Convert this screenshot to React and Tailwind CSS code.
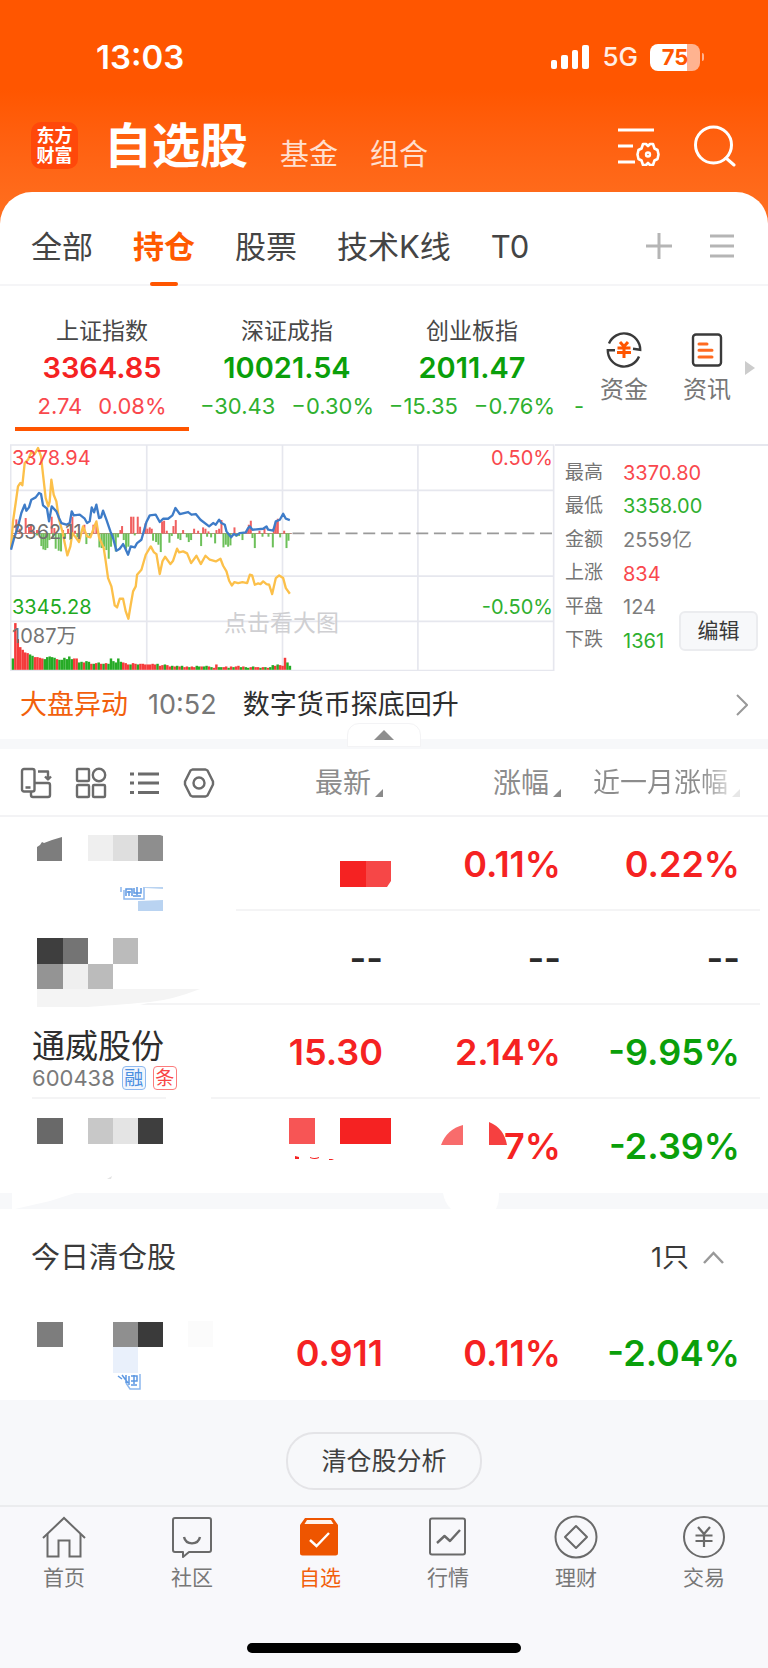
import React, { useState } from 'react';

const indices = [
  { name: '上证指数', value: '3364.85', change: '2.74', percent: '0.08%', up: true },
  { name: '深证成指', value: '10021.54', change: '−30.43', percent: '−0.30%', up: false },
  { name: '创业板指', value: '2011.47', change: '−15.35', percent: '−0.76%', up: false },
];

const marketStats = [
  { label: '最高', value: '3370.80', tone: 'text-[#f9484d]' },
  { label: '最低', value: '3358.00', tone: 'text-[#2fb02f]' },
  { label: '金额', value: '2559亿', tone: 'text-[#7d7d7d]' },
  { label: '上涨', value: '834', tone: 'text-[#f9484d]' },
  { label: '平盘', value: '124', tone: 'text-[#7d7d7d]' },
  { label: '下跌', value: '1361', tone: 'text-[#2fb02f]' },
];

// [x, height], drawn up or down from the zero line
const momentumBars = [
  [50, 42], [60, 14], [78, 46], [88, 20], [94, 26], [102, 8], [112, 10], [156, 50], [164, 16], [190, 10],
  [205, 14], [218, 50], [226, 8], [254, 26], [281, 26], [290, 22], [362, 10], [367, 22], [394, 50], [401, 50],
  [414, 50], [421, 20], [437, 30], [443, 14], [450, 18], [456, 14], [487, 36], [493, 38], [501, 8], [521, 22],
  [528, 40], [550, 10], [583, 14], [595, 8], [610, 18], [617, 14], [626, 6], [650, 10], [658, 14], [665, 40],
  [704, 18], [741, 10], [747, 26], [753, 38], [779, 8], [794, 14], [822, 16], [828, 36], [834, 44], [853, 8],
  [112, -6], [125, -38], [131, -48], [137, -50], [143, -44], [149, -20], [160, -12], [168, -46], [177, -52], [184, -54],
  [196, -16], [212, -20], [233, -12], [260, -32], [270, -8], [299, -42], [306, -44], [313, -40], [320, -50], [327, -76],
  [334, -40], [341, -16], [348, -54], [355, -12], [372, -20], [379, -46], [386, -40], [405, -6], [460, -22], [469, -26],
  [476, -34], [483, -56], [509, -28], [516, -8], [535, -16], [542, -20], [561, -12], [567, -26], [574, -20], [604, -38],
  [622, -10], [634, -12], [646, -30], [671, -42], [678, -34], [685, -40], [692, -36], [710, -10], [718, -8], [728, -20],
  [758, -14], [765, -44], [788, -10], [806, -10], [819, -42], [841, -12], [860, -44], [866, -22],
];

// [height, up]
const volumeBars = [
  [34, 0], [140, 1], [92, 1], [68, 1], [60, 1], [52, 1], [50, 1], [46, 0], [42, 0], [38, 1],
  [38, 1], [36, 1], [34, 1], [32, 0], [38, 0], [40, 0], [38, 0], [36, 0], [32, 1], [30, 0],
  [30, 0], [36, 0], [32, 0], [40, 0], [32, 0], [34, 1], [34, 1], [22, 0], [24, 0], [22, 1],
  [26, 0], [24, 0], [18, 1], [18, 0], [20, 1], [22, 0], [18, 1], [18, 0], [20, 1], [18, 0],
  [34, 0], [26, 0], [22, 0], [34, 0], [24, 0], [22, 1], [20, 1], [16, 1], [16, 0], [20, 1],
  [18, 1], [16, 0], [18, 1], [18, 1], [16, 1], [16, 1], [16, 1], [18, 1], [16, 1], [18, 0],
  [12, 1], [14, 1], [16, 0], [14, 1], [10, 1], [12, 0], [10, 1], [12, 0], [10, 1], [12, 0],
  [8, 1], [10, 1], [8, 0], [10, 1], [8, 1], [12, 0], [10, 0], [10, 1], [10, 0], [12, 0],
  [10, 1], [8, 0], [6, 1], [16, 1], [8, 0], [8, 0], [8, 1], [10, 1], [6, 0], [10, 1],
  [8, 0], [10, 1], [12, 1], [8, 0], [10, 1], [8, 0], [6, 0], [8, 1], [10, 0], [8, 1],
  [8, 1], [6, 0], [8, 1], [8, 0], [6, 1], [8, 0], [14, 0], [12, 1], [16, 0], [14, 1],
  [12, 1], [36, 1], [22, 0], [12, 0],
];

const averageLine =
  '34,350 40,270 48,215 55,165 62,155 68,162 75,95 85,85 95,62 105,68 115,50 124,75 130,130 138,200 146,225 150,210 155,145 162,190 170,210 178,265 188,300 195,335 203,372 212,345 218,305 228,318 238,332 250,285 262,315 272,318 282,290 290,270 298,318 312,350 318,390 325,440 335,465 345,522 352,528 360,502 370,502 378,540 386,562 393,520 400,480 408,465 412,430 425,415 438,370 453,345 462,362 470,368 480,428 488,390 496,376 512,398 520,388 532,352 538,363 550,360 562,366 574,395 590,373 603,398 617,373 630,385 648,390 662,382 670,403 680,420 688,448 696,462 704,452 715,455 728,452 742,455 750,430 757,432 765,460 775,456 782,458 790,450 800,458 808,460 817,488 828,440 838,432 850,440 858,470 870,487';

const priceLine =
  '34,355 42,325 55,285 65,245 75,220 80,238 88,228 95,205 108,198 118,185 124,188 130,222 142,232 148,270 156,225 170,240 178,260 185,275 200,280 210,275 216,240 222,252 240,250 255,262 262,275 270,270 276,228 283,243 290,220 298,260 304,258 310,238 320,265 332,300 340,320 350,358 360,352 370,338 376,350 385,370 393,345 405,348 412,335 425,325 432,300 440,272 450,252 468,250 480,272 490,262 505,262 518,252 527,230 540,248 565,242 575,250 588,248 602,265 628,285 640,275 648,280 658,265 665,275 675,280 680,300 694,318 702,308 710,312 720,305 738,303 745,290 750,285 758,295 790,292 800,285 805,295 820,298 828,270 840,265 850,247 858,262 870,266';

const SignalIcon = () => (
  <svg className="h-[26px] w-[40px]" viewBox="0 0 40 26" fill="white">
    <rect x="1" y="16" width="6" height="9" rx="2" />
    <rect x="11" y="11" width="7" height="14" rx="2" />
    <rect x="22" y="6" width="6" height="19" rx="2" />
    <rect x="32" y="1" width="7" height="24" rx="2" />
  </svg>
);

const FilterSettingsIcon = () => (
  <svg className="h-[40px] w-[42px]" viewBox="0 0 42 40" fill="none" stroke="white" strokeWidth="3">
    <path d="M0 4h36M0 20h15M0 36h17" />
    <path d="M25 18h3l2 2 2-2h3l1.500 4.500 3 1.500 1 4.500-1 4.500-3 1.500L35 39h-3l-2-2-2 2h-3l-1.500-4.500-3-1.500-1-4.500 1-4.500 3-1.500z" strokeWidth="2.600" strokeLinejoin="round" />
    <circle cx="30" cy="28.500" r="2" strokeWidth="2.400" />
  </svg>
);

const SearchIcon = () => (
  <svg className="h-[42px] w-[42px]" viewBox="0 0 42 42" fill="none" stroke="white" strokeWidth="3" strokeLinecap="round">
    <circle cx="19.500" cy="20" r="18" />
    <path d="M32 33l8 7" />
  </svg>
);

const FundsIcon = () => (
  <svg className="h-[36px] w-[36px]" viewBox="0 0 36 36" fill="none" stroke="#3a3a3a" strokeWidth="2.400">
    <path d="M3 11.500A16.200 16.200 0 0 1 34.200 17.800L27 16.800" />
    <path d="M33 24.500A16.200 16.200 0 0 1 1.800 18.200L9 18.200" />
    <path d="M14 10l4 4.500 4-4.500M11.500 16h13M11 20.500h14M18 14.500v11.500" stroke="#ff5500" strokeWidth="3" />
  </svg>
);

const NewsIcon = () => (
  <svg className="h-[36px] w-[32px]" viewBox="0 0 32 36" fill="none" stroke="#3a3a3a" strokeWidth="2.400">
    <rect x="2" y="2.500" width="28" height="31" rx="3" />
    <path d="M8 12h8M8 18.200h13M8 25h13" stroke="#ff6a20" strokeWidth="3" strokeLinecap="round" />
  </svg>
);

const SwapLayoutIcon = () => (
  <svg className="h-[32px] w-[32px]" viewBox="0 0 32 32" fill="none" stroke="#6b6b6b" strokeWidth="2.400" strokeLinejoin="round">
    <rect x="2" y="2" width="12.500" height="22.500" rx="2" />
    <path d="M14.500 16H28a2 2 0 0 1 2 2v10a2 2 0 0 1-2 2H13a2 2 0 0 1-2-2v-3.500" />
    <path d="M5.500 20.500h5M18 4.500h10V11M25 9.500l3 3 3-3" />
  </svg>
);

const GridIcon = () => (
  <svg className="h-[32px] w-[32px]" viewBox="0 0 32 32" fill="none" stroke="#6b6b6b" strokeWidth="2.400">
    <rect x="2" y="2" width="12" height="12" rx="1" />
    <circle cx="24" cy="8" r="6.200" />
    <rect x="2" y="18" width="12" height="12" rx="1" />
    <rect x="18" y="18" width="12" height="12" rx="1" />
  </svg>
);

const ListIcon = () => (
  <svg className="h-[26px] w-[30px]" viewBox="0 0 30 26" fill="none" stroke="#6b6b6b" strokeWidth="3">
    <path d="M0 4h4M0 13h4M0 22.500h4M8 4h21M8 13h21M8 22.500h21" />
  </svg>
);

const HexagonIcon = () => (
  <svg className="h-[30px] w-[32px]" viewBox="0 0 32 30" fill="none" stroke="#6b6b6b" strokeWidth="2.400" strokeLinejoin="round">
    <path d="M9.500 1.500h13l2 1L30 13.500v3l-5.500 11-2 1h-13l-2-1L2 16.500v-3l5.500-11z" />
    <circle cx="16" cy="15" r="5.500" />
  </svg>
);

const HomeIcon = () => (
  <svg className="h-[44px] w-[44px]" viewBox="0 0 44 44" fill="none" stroke="#6a6a6a" strokeWidth="2">
    <path d="M1 23L22 3l21 20" />
    <path d="M5.500 19v22.500h11V25.500h11v16h11V19" />
  </svg>
);

const CommunityIcon = () => (
  <svg className="h-[44px] w-[44px]" viewBox="0 0 44 44" fill="none" stroke="#6a6a6a" strokeWidth="2" strokeLinejoin="round">
    <path d="M5 3h34a2 2 0 0 1 2 2v30a2 2 0 0 1-2 2H19l-6 5v-5H5a2 2 0 0 1-2-2V5a2 2 0 0 1 2-2z" />
    <path d="M14 22c2 8.500 14 8.500 16 0" strokeWidth="2.400" />
  </svg>
);

const WatchlistIcon = () => (
  <svg className="h-[44px] w-[44px]" viewBox="0 0 44 44" fill="none">
    <path d="M7 3h28l5 7v28a2.500 2.500 0 0 1-2.500 2.500h-33A2.500 2.500 0 0 1 2 38V10z" fill="#ee5500" />
    <path d="M9 5h24l2.500 4h-29z" fill="#fff3ea" />
    <path d="M12 25l6.500 6L31 18" stroke="white" strokeWidth="2.400" />
  </svg>
);

const MarketIcon = () => (
  <svg className="h-[44px] w-[44px]" viewBox="0 0 44 44" fill="none" stroke="#6a6a6a" strokeWidth="2" strokeLinejoin="round">
    <rect x="4" y="3.500" width="35" height="36" rx="2" />
    <path d="M11 28l7.500-7 5.500 5L34 15" strokeWidth="2.400" />
  </svg>
);

const WealthIcon = () => (
  <svg className="h-[44px] w-[44px]" viewBox="0 0 44 44" fill="none" stroke="#6a6a6a" strokeWidth="2" strokeLinejoin="round">
    <circle cx="22" cy="22" r="20.500" />
    <path d="M22 11l11 11-11 11-11-11z" />
  </svg>
);

const TradeIcon = () => (
  <svg className="h-[44px] w-[44px]" viewBox="0 0 44 44" fill="none" stroke="#6a6a6a" strokeWidth="2">
    <circle cx="22" cy="22" r="20" />
    <path d="M16 12l6 7 6-7M13.500 20.500h17M13.500 26h17M22 19v13" strokeWidth="2.200" />
  </svg>
);

const navItems = [
  { label: '首页', icon: HomeIcon },
  { label: '社区', icon: CommunityIcon },
  { label: '自选', icon: WatchlistIcon },
  { label: '行情', icon: MarketIcon },
  { label: '理财', icon: WealthIcon },
  { label: '交易', icon: TradeIcon },
];

// Masked stock names
const MaskedNameOne = () => (
  <svg className="block h-[94px] w-[236px]" viewBox="0 0 236 94">
    <path d="M37 44V30l3-2 2-3 2 1 8-3 10-3v24z" fill="#7d7d7d" />
    <path d="M88 18h25v26H88z" fill="#efefef" />
    <path d="M113 18h25v26h-25z" fill="#dedede" />
    <path d="M138 18h22l3 1v25h-25z" fill="#8e8e8e" />
    <path d="M138 84l25-1v12h-25z" fill="#b9d3f1" />
    <path d="M145 70h18v2l-18-1z" fill="#b9d3f1" />
    <path d="M121 70v5M124 73v9h20V70" fill="none" stroke="#8db8ee" strokeWidth="1.500" />
    <path d="M126 79v-7h6v7M127 75h4M129 74v5M134 71v5h7v-5M137 70v8M133 79h8" fill="none" stroke="#5d98e2" strokeWidth="1.500" />
  </svg>
);

const MaskedNameTwo = () => (
  <svg className="block h-[94px] w-[236px] overflow-visible" viewBox="0 0 236 94">
    <path d="M37 27h26v26H37z" fill="#3e3e3e" />
    <path d="M63 27h25v26H63z" fill="#747474" />
    <path d="M113 27h25v26h-25z" fill="#bbbbbb" />
    <path d="M37 53h26v25H37z" fill="#949494" />
    <path d="M63 53h25v25H63z" fill="#efefef" />
    <path d="M88 53h25v25H88z" fill="#bbbbbb" />
    <path d="M148 92h88v2h-96z" fill="#f4f4f5" />
    <path d="M37 78h163q-28 11-50 13t-62 5H37z" fill="#f4f4f4" />
  </svg>
);

const MaskedNameThree = () => (
  <svg className="block h-[94px] w-[236px]" viewBox="0 0 236 94">
    <path d="M37 19h26v26H37z" fill="#696969" />
    <path d="M88 19h25v26H88z" fill="#c8c8c8" />
    <path d="M113 19h25v26h-25z" fill="#e4e4e4" />
    <path d="M138 19h25v26h-25z" fill="#3e3e3e" />
    <path d="M107 80l5-3-1 3z" fill="#e4e4e4" />
  </svg>
);

const MaskedNameSold = () => (
  <svg className="block h-[94px] w-[236px]" viewBox="0 0 236 94">
    <path d="M37 16h26v25H37z" fill="#7d7d7d" />
    <path d="M113 16h25v25h-25z" fill="#8f8f8f" />
    <path d="M138 16h25v25h-25z" fill="#3a3a3a" />
    <path d="M188 15h25v26h-25z" fill="#fbfbfb" />
    <path d="M113 41h25v26h-25z" fill="#e9f0fb" />
    <path d="M140 68v15h-10l-4-6" fill="none" stroke="#8db8ee" strokeWidth="1.500" />
    <path d="M118 70l4 3M122 69l6 8M126 69v8M129 70v9M131 70h6v5h-6M134 69v9M131 79h6" fill="none" stroke="#5d98e2" strokeWidth="1.500" />
  </svg>
);

const NamedStock = () => (
  <div className="relative flex h-[94px] flex-col pt-[22px] pl-8">
    <p className="text-[33px] leading-[38px] text-[#2e2e2e]">通威股份</p>
    <div className="flex h-[26px] items-center gap-[7px]">
      <span className="text-[22px] leading-[26px] text-[#7a7a7a]">600438</span>
      <span className="flex size-6 items-center justify-center rounded-[4px] border border-[#8db8ee] bg-[#f1f6fd] text-[19px] leading-none text-[#4a8ee0]">融</span>
      <span className="flex size-6 items-center justify-center rounded-[4px] border border-[#fb7c7c] text-[19px] leading-none text-[#f94444]">条</span>
    </div>
    <div className="absolute bottom-0 left-8 h-[2px] w-[134px] bg-[#f4f4f5]"></div>
    <div className="absolute right-0 bottom-0 h-[2px] w-[25px] bg-[#f4f4f5]"></div>
  </div>
);

const MaskedPrice = () => (
  <svg className="mt-5 -mr-2 h-[26px] w-[51px]" viewBox="0 0 51 26">
    <path d="M0 0h26v26H0z" fill="#f52222" />
    <path d="M26 0h25v20l-4 6H26z" fill="#f64747" />
  </svg>
);

const MaskedPriceTwo = () => (
  <svg className="-mr-2 h-[56px] w-[102px]" viewBox="0 0 102 56">
    <path d="M0 0h26v26H0z" fill="#f75555" />
    <path d="M51 0h51v26H51z" fill="#f52222" />
    <path d="M6 38l4 1v2H6zM21 39q4 2 9 0v1q-4 2-9 0zM40 41h5l-2 1h-3z" fill="#f52222" />
  </svg>
);

const MaskedChange = () => (
  <span className="flex items-center justify-end">
    <svg className="-mr-1 h-[52px] w-[67px]" viewBox="0 0 67 52">
      <path d="M0 25Q6 9 22 5v20z" fill="#f86c6c" />
      <path d="M48 2q15 6 18 23H48z" fill="#f64040" />
    </svg>
    7%
  </span>
);

const Corner = ({ faded }) => (
  <svg className={`mt-5 h-[8px] w-[8px] ${faded ? 'opacity-20' : ''}`} viewBox="0 0 8 8">
    <path d="M8 0v8H0z" fill="#8a8a8a" />
  </svg>
);

const stocks = [
  { id: 1, name: <MaskedNameOne />, latest: <MaskedPrice />, change: '0.11%', month: '0.22%', monthUp: true, line: true },
  { id: 2, name: <MaskedNameTwo />, empty: true, latest: '--', change: '--', month: '--', line: true },
  { id: 3, name: <NamedStock />, latest: '15.30', change: '2.14%', month: '-9.95%', line: true },
  { id: 4, name: <MaskedNameThree />, latest: <MaskedPriceTwo />, change: <MaskedChange />, month: '-2.39%' },
];

const soldStocks = [
  { id: 5, name: <MaskedNameSold />, latest: '0.911', change: '0.11%', month: '-2.04%' },
];

const StockRow = ({ stock }) => {
  const up = stock.empty ? 'text-[#2b2b2b]' : 'text-[#f52222]';
  const monthTone = stock.empty ? 'text-[#2b2b2b]' : stock.monthUp ? 'text-[#f52222]' : 'text-[#0a9f0a]';
  const line = stock.line ? 'border-[#f4f4f5]' : 'border-transparent';
  const cell = `flex h-[94px] items-center justify-end border-b-2 pt-[2px] text-[36px] font-semibold ${line}`;

  return (
    <tr>
      <td className="p-0">{stock.name}</td>
      <td className="p-0"><div className={`${cell} ${up}`}>{stock.latest}</div></td>
      <td className="p-0"><div className={`${cell} ${up}`}>{stock.change}</div></td>
      <td className="p-0"><div className={`mr-2 pr-5 ${cell} ${monthTone}`}>{stock.month}</div></td>
    </tr>
  );
};

const Columns = () => (
  <colgroup>
    <col className="w-[236px]" />
    <col className="w-[147px]" />
    <col className="w-[178px]" />
    <col />
  </colgroup>
);

const IndexChart = () => (
  <div className="relative min-w-0 flex-1 text-[20px] leading-6">
    <svg className="block w-full" viewBox="31 38 1634 682">
      <g fill="none" stroke="#e6e7ee" strokeWidth="5">
        <path d="M33 41H1661V717H33z" />
        <path d="M33 177H1661M33 434H1661M33 570H1661M441 41V717M848 41V717M1254 41V717" />
      </g>
      <path d="M878 306H1661" stroke="#9a9a9a" strokeWidth="5" strokeDasharray="36 17" />
      <path d="M34 306H876" stroke="#b98d80" strokeWidth="3" />
      {momentumBars.map(([x, h], i) => (
        <rect key={i} x={x - 3} y={h > 0 ? 306 - h : 306} width="6" height={Math.abs(h)} fill={h > 0 ? '#f06060' : '#6dc05a'} />
      ))}
      {volumeBars.map(([h, up], i) => (
        <rect key={i} x={36 + i * 7.35} y={715 - h} width="7.4" height={h} fill={up ? '#f53b3b' : '#25aa25'} />
      ))}
      <polyline points={averageLine} fill="none" stroke="#fcc04a" strokeWidth="7" strokeLinejoin="round" />
      <polyline points={priceLine} fill="none" stroke="#3e7cc8" strokeWidth="7" strokeLinejoin="round" />
    </svg>
    <span className="absolute top-[2px] left-[2px] text-[#f9484d]">3378.94</span>
    <span className="absolute top-[2px] right-[2px] text-[#f9484d]">0.50%</span>
    <span className="absolute top-[76px] left-[2px] text-[#707070]">3362.11</span>
    <span className="absolute bottom-[52px] left-[2px] text-[#1faa1f]">3345.28</span>
    <span className="absolute right-[2px] bottom-[52px] text-[#2fb02f]">-0.50%</span>
    <span className="absolute bottom-[23px] left-[2px] text-[#757575]">1087万</span>
    <span className="absolute bottom-[36px] left-[214px] text-[23px] text-[#cfcfd2]">点击看大图</span>
  </div>
);

const App = () => {
  const [activeTab, setActiveTab] = useState('持仓');
  const [soldOpen, setSoldOpen] = useState(true);

  return (
    <div className="min-h-screen bg-[#f7f8fa] font-['Inter','Noto_Sans_CJK_SC',sans-serif]">
      {/* Header */}
      <header className="bg-linear-to-b from-[#ff5600] from-40% to-[#ff7020] pb-8 text-white">
        <div className="flex items-center justify-between pt-[39px] pr-[64px] pl-[96px]">
          <span className="text-[33px] leading-9 font-semibold">13:03</span>
          <div className="flex items-center gap-3">
            <SignalIcon />
            <span className="text-[26px] leading-9 font-medium text-white/90">5G</span>
            <div className="flex items-center gap-[2px]">
              <div className="flex h-[27px] w-[50px] items-center justify-center rounded-lg bg-linear-to-r from-white from-75% to-[#ffb390] to-75% text-[22px] font-bold text-[#ff5600]">
                75
              </div>
              <div className="h-2 w-[2px] rounded-r bg-[#ffb390]"></div>
            </div>
          </div>
        </div>
        <div className="flex h-[117px] items-center pt-[34px] pr-8 pb-[10px] pl-[31px]">
          <div className="flex h-[47px] w-[47px] flex-col items-center justify-center rounded-[10px] bg-[#ff480a] text-[18px] leading-5 font-bold">
            <span>东方</span>
            <span>财富</span>
          </div>
          <h1 className="ml-[26px] text-[48px] leading-[70px] font-bold">自选股</h1>
          <button className="mt-[19px] ml-8 text-[29px] leading-9 text-white/80">基金</button>
          <button className="mt-[19px] ml-8 text-[29px] leading-9 text-white/80">组合</button>
          <button className="ml-auto" aria-label="设置"><FilterSettingsIcon /></button>
          <button className="ml-[34px]" aria-label="搜索"><SearchIcon /></button>
        </div>
      </header>

      <main>
        <div className="-mt-8 rounded-t-[32px] bg-white">
          {/* Group tabs */}
          <div className="flex h-[94px] items-center border-b-2 border-[#f5f5f7] pr-[34px] pl-[31px]">
            <div className="flex h-full gap-10">
              {['全部', '持仓', '股票', '技术K线', 'T0'].map((tab) => (
                <button
                  key={tab}
                  onClick={() => setActiveTab(tab)}
                  className={`relative h-full pt-5 pb-[2px] text-[31px] ${tab === activeTab ? 'font-bold text-[#ff5a00]' : 'text-[#444444]'}`}
                >
                  {tab}
                  {tab === activeTab && (
                    <span className="absolute -bottom-[2px] left-1/2 h-1 w-7 -translate-x-1/2 rounded-sm bg-[#ff5500]"></span>
                  )}
                </button>
              ))}
            </div>
            <button className="mt-4 ml-auto" aria-label="添加">
              <svg className="h-[26px] w-[26px]" viewBox="0 0 26 26" stroke="#b5b5b5" strokeWidth="3">
                <path d="M13 0v26M0 13h26" />
              </svg>
            </button>
            <button className="mt-4 ml-[38px]" aria-label="菜单">
              <svg className="h-[26px] w-[24px]" viewBox="0 0 24 26" stroke="#b5b5b5" strokeWidth="3">
                <path d="M0 3h24M0 13h24M0 23h24" />
              </svg>
            </button>
          </div>

          {/* Indices */}
          <div className="flex pt-[30px] pr-[13px]">
            <div className="flex min-w-0 flex-1 gap-[11px] overflow-hidden pl-[15px]">
              {indices.map((item, i) => (
                <button
                  key={item.name}
                  className={`w-[174px] shrink-0 border-b-4 whitespace-nowrap ${i === 0 ? 'border-[#ff5500]' : 'border-transparent'} ${item.up ? 'text-[#f9484d]' : 'text-[#2fb02f]'}`}
                >
                  <p className="text-[23px] leading-[30px] text-[#484848]">{item.name}</p>
                  <p className={`text-[29px] leading-[44px] font-semibold ${item.up ? 'text-[#f52222]' : 'text-[#0a9f0a]'}`}>{item.value}</p>
                  <p className="-mx-2 flex h-[37px] justify-center gap-4 pb-1 text-[22px] leading-8">
                    <span>{item.change}</span>
                    <span>{item.percent}</span>
                  </p>
                </button>
              ))}
              <p className="shrink-0 self-end pb-[9px] pl-1 text-[22px] leading-8 text-[#2fb02f]">-</p>
            </div>
            <div className="flex items-start gap-[35px] pt-4 pl-3 text-[24px] leading-[30px] text-[#777777]">
              <button className="flex flex-col items-center gap-[7px]"><FundsIcon />资金</button>
              <button className="flex flex-col items-center gap-[7px]"><NewsIcon />资讯</button>
            </div>
            <svg className="mt-[45px] ml-[14px] h-[14px] w-[10px]" viewBox="0 0 10 14">
              <path d="M0 0l10 7-10 7z" fill="#cccccc" />
            </svg>
          </div>

          {/* Chart and market figures */}
          <div className="flex pt-[13px] pl-[10px]">
            <IndexChart />
            <div className="relative w-[213px] border-t-2 border-[#e6e7ee] pt-[10px] pb-[14px] pl-[10px]">
              <dl className="grid h-full grid-cols-[58px_1fr] items-center text-[19px]">
                {marketStats.map((stat) => (
                  <React.Fragment key={stat.label}>
                    <dt className="text-[#757575]">{stat.label}</dt>
                    <dd className={`text-[20px] ${stat.tone}`}>{stat.value}</dd>
                  </React.Fragment>
                ))}
              </dl>
              <button className="absolute right-[10px] bottom-5 h-10 w-[79px] rounded-md border-2 border-[#ebecef] bg-[#f7f8fa] text-[21px] leading-8 text-[#3a3a3a]">
                编辑
              </button>
            </div>
          </div>

          {/* News */}
          <div className="relative">
            <a href="#news" className="flex h-[68px] items-center pr-5 pl-5 text-[27px] text-[#2e2e2e]">
              <span className="text-[#f2600c]">大盘异动</span>
              <span className="ml-5 text-[#777777]">10:52</span>
              <span className="ml-[26px]">数字货币探底回升</span>
              <svg className="ml-auto h-[22px] w-[12px]" viewBox="0 0 12 22" fill="none" stroke="#999999" strokeWidth="2">
                <path d="M1 1l10 10L1 21" />
              </svg>
            </a>
            <div className="h-[10px] bg-[#f7f8fa]"></div>
            <button className="absolute bottom-[2px] left-1/2 flex h-6 w-[74px] -translate-x-1/2 items-center justify-center rounded-t-xl border border-[#f3f3f5] bg-white" aria-label="收起">
              <svg className="h-[10px] w-[20px]" viewBox="0 0 20 10">
                <path d="M10 0l10 10H0z" fill="#8e8e8e" />
              </svg>
            </button>
          </div>
        </div>

        {/* Holdings */}
        <table className="w-full table-fixed border-collapse bg-white">
          <Columns />
          <thead>
            <tr className="h-[67px] border-b-2 border-[#f3f3f5] text-[28px] text-[#8c8c8c]">
              <th className="px-0 pt-[2px] pb-0">
                <div className="flex items-center gap-[23px] pl-5">
                  <button aria-label="切换布局"><SwapLayoutIcon /></button>
                  <button aria-label="宫格"><GridIcon /></button>
                  <button aria-label="列表"><ListIcon /></button>
                  <button aria-label="设置"><HexagonIcon /></button>
                </div>
              </th>
              <th className="px-0 pt-[2px] pb-0 font-normal">
                <div className="flex items-center justify-end gap-1">最新<Corner /></div>
              </th>
              <th className="px-0 pt-[2px] pb-0 font-normal">
                <div className="flex items-center justify-end gap-1">涨幅<Corner /></div>
              </th>
              <th className="px-0 pt-[2px] pb-0 font-normal whitespace-nowrap">
                <div className="flex items-center justify-end gap-1 pr-7 text-[27px]">
                  <span className="bg-linear-to-r from-[#8c8c8c] from-80% to-[#d8d8d8] bg-clip-text text-transparent">近一月涨幅</span>
                  <Corner faded />
                </div>
              </th>
            </tr>
          </thead>
          <tbody>
            {stocks.map((stock) => (
              <StockRow key={stock.id} stock={stock} />
            ))}
          </tbody>
        </table>

        <svg className="block h-[16px] w-full" viewBox="0 0 768 18" preserveAspectRatio="none">
          <path d="M12 0h63L50 9 15 18h-3z" fill="white" />
          <path d="M443 0h56q0 12-3 18h-45q-6-6-8-18z" fill="white" />
        </svg>

        {/* Sold today */}
        <section className="bg-white">
          <div className="flex h-[97px] items-center justify-between pr-11 pl-[31px] text-[#3a3a3a]">
            <h2 className="text-[29px]">今日清仓股</h2>
            <button onClick={() => setSoldOpen(!soldOpen)} className="flex items-center gap-[14px] text-[27px]">
              1只
              <svg className="h-[13px] w-[21px]" viewBox="0 0 21 13" fill="none" stroke="#999999" strokeWidth="2.500">
                <path d="M1 12l9.500-10L20 12" />
              </svg>
            </button>
          </div>
          {soldOpen && (
            <table className="w-full table-fixed border-collapse">
              <Columns />
              <tbody>
                {soldStocks.map((stock) => (
                  <StockRow key={stock.id} stock={stock} />
                ))}
              </tbody>
            </table>
          )}
        </section>

        <div className="flex justify-center pt-8 pb-[15px]">
          <button className="h-[58px] rounded-[28px] border-2 border-[#e4e4e7] px-[33px] text-[25px] text-[#3f3f3f]">清仓股分析</button>
        </div>
      </main>

      {/* Bottom navigation */}
      <nav className="border-t-2 border-[#ebecee] bg-[#f8f8fb] pb-[14px]">
        <div className="flex pt-2">
          {navItems.map(({ label, icon: Icon }) => (
            <a
              key={label}
              href={`#${label}`}
              className={`flex flex-1 flex-col items-center gap-1 text-[21px] leading-[30px] ${label === '自选' ? 'text-[#f2600c]' : 'text-[#777777]'}`}
            >
              <Icon />
              {label}
            </a>
          ))}
        </div>
        <div className="mx-auto mt-[50px] h-[10px] w-[274px] rounded-full bg-black"></div>
      </nav>
    </div>
  );
};

export default App;
